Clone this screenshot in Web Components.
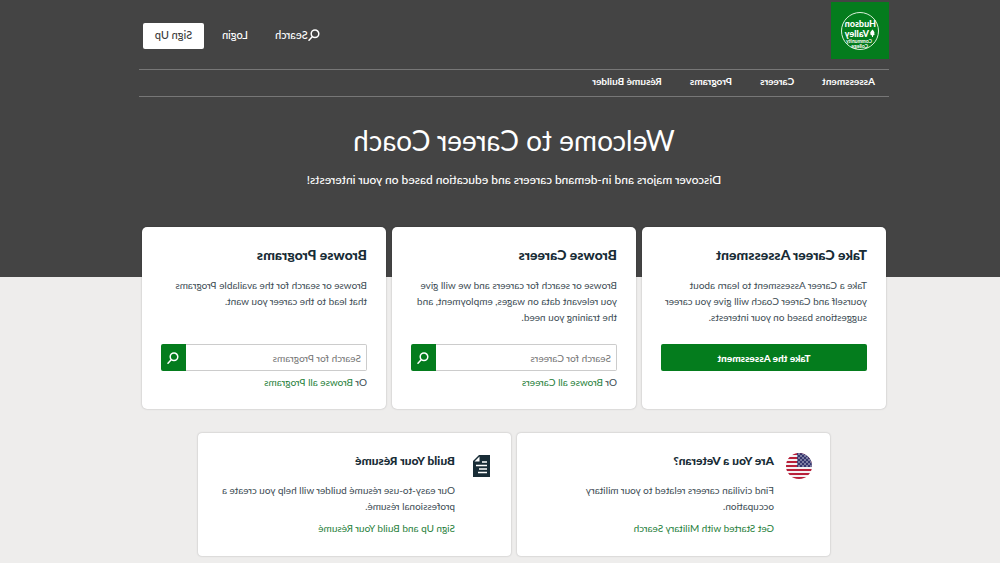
<!DOCTYPE html>
<html lang="en">
<head>
<meta charset="utf-8">
<meta name="viewport" content="width=device-width, initial-scale=1">
<title>Career Coach</title>
<style>
  body { margin: 0; background: #eeedec; font-family: Lato, "Open Sans", sans-serif; color: #3d4c54; overflow-x: hidden; }
</style>
</head>
<body>
<career-page></career-page>
<script>
const define = (name, html, setup) => {
  const template = document.createElement('template');
  template.innerHTML = html;
  customElements.define(name, class extends HTMLElement {
    constructor() {
      super();
      const root = this.attachShadow({ mode: 'open' });
      root.append(template.content.cloneNode(true));
    }
    connectedCallback() { if (setup) setup(this, this.shadowRoot); }
  });
};

define('search-icon', `
  <style>:host { display: inline-block; width: 12px; height: 12px; } svg { display: block; width: 100%; height: 100%; }</style>
  <svg viewBox="0 0 12 12" fill="none" stroke="currentColor" stroke-width="1.5" stroke-linecap="round" aria-hidden="true">
    <circle cx="5" cy="4.8" r="3.8"/><path d="M7.8 7.8 11 11.2"/>
  </svg>`);

define('college-logo', `
  <style>:host { display: block; width: 58px; height: 57px; background: #047c1d; } a, svg { display: block; }</style>
  <a href="#" aria-label="College home">
    <svg width="58" height="57" viewBox="0 0 58 57" font-family="Lato, sans-serif" fill="#fff">
      <circle cx="29" cy="29" r="18.500" fill="none" stroke="#d9efd9" stroke-width="1"/>
      <text x="13" y="25" font-size="9" font-weight="900">Hudson</text>
      <path d="M16.500 27.500c2.500 2.500 3 3.500 1.500 5h1.500l-2.500 1v1.500h-1v-1.500l-2.500-1h1.500c-1-1.500-.5-3 1.500-5z"/>
      <text x="20" y="35" font-size="9" font-weight="900">Valley</text>
      <text x="17" y="41" font-size="5" font-weight="700">Community</text>
      <text x="21" y="46" font-size="5" font-weight="700">College</text>
    </svg>
  </a>`);

define('site-header', `
  <style>
    :host { display: block; color: #fff; font-size: 11px; font-weight: 500; }
    .top { display: flex; justify-content: space-between; align-items: flex-start; height: 67px; padding-top: 2px; }
    .tools { display: flex; align-items: flex-start; padding: 21px 4px 0 0; line-height: 24px; }
    a { color: inherit; text-decoration: none; white-space: nowrap; }
    .search { display: flex; align-items: center; margin-right: 27px; }
    .login { margin-right: 18px; }
    .signup { background: #fff; color: #3c3c3c; border-radius: 2px; width: 61px; padding-bottom: 2px; text-align: center; }
    nav { display: flex; gap: 28px; padding: 0 14px 4px; border: solid #777; border-width: 1px 0; font-size: 10px; font-weight: 700; line-height: 22px; }
  </style>
  <div class="top">
    <college-logo></college-logo>
    <div class="tools">
      <a class="search" href="#"><search-icon></search-icon>Search</a>
      <a class="login" href="#">Login</a>
      <a class="signup" href="#">Sign Up</a>
    </div>
  </div>
  <nav aria-label="Main">
    <a href="#">Assessment</a><a href="#">Careers</a><a href="#">Programs</a><a href="#">Résumé Builder</a>
  </nav>`);

define('hero-banner', `
  <style>
    :host { display: block; color: #fff; text-align: center; padding-top: 25px; }
    h1 { margin: 0; font-size: 28px; line-height: 36px; font-weight: 400; }
    p { margin: 12px 0 0; font-size: 12px; line-height: 20px; font-weight: 500; }
  </style>
  <h1><slot name="title"></slot></h1>
  <p><slot></slot></p>`);

define('action-card', `
  <style>
    :host { display: flex; flex-direction: column; box-sizing: border-box; height: 182px; padding: 19px; background: #fff; border-radius: 5px; box-shadow: 0 0 2px #0004; }
    h2 { margin: 0 0 13px; font-size: 14px; line-height: 18px; font-weight: 900; color: #182c36; }
    p { margin: 0; height: 67px; font-size: 10px; line-height: 16px; }
  </style>
  <h2><slot name="title"></slot></h2>
  <p><slot></slot></p>
  <slot name="action"></slot>`);

define('primary-button', `
  <style>
    :host { display: block; }
    button { display: block; width: 100%; height: 27px; border: 0; border-radius: 2px; padding: 0; background: #047c1d; color: #fff; font: 900 10px Lato, sans-serif; }
  </style>
  <button type="button"><slot></slot></button>`);

define('search-form', `
  <style>
    :host { display: block; font-size: 10px; line-height: 16px; }
    form { display: flex; height: 27px; }
    input { flex: 1; min-width: 0; box-sizing: border-box; border: 1px solid #ccc; border-right: 0; border-radius: 2px 0 0 2px; padding: 0 5px; font: 10px Lato, sans-serif; background: #fff; }
    input::placeholder { color: #757575; opacity: 1; }
    button { display: flex; align-items: center; justify-content: center; width: 25px; border: 0; padding: 0; background: #047c1d; color: #fff; border-radius: 0 2px 2px 0; }
    div { margin-top: 3px; }
    a { color: #26803a; text-decoration: none; }
  </style>
  <form><input type="text"><button type="button" aria-label="Search"><search-icon></search-icon></button></form>
  <div>Or <a href="#"></a></div>`,
  (host, root) => {
    const topic = host.getAttribute('topic');
    const input = root.querySelector('input');
    input.placeholder = 'Search for ' + topic;
    input.setAttribute('aria-label', 'Search for ' + topic);
    root.querySelector('a').textContent = 'Browse all ' + topic;
  });

define('info-card', `
  <style>
    :host { display: flex; gap: 12px; box-sizing: border-box; height: 123px; padding: 20px 20px 20px 18px; background: #fff; border-radius: 4px; box-shadow: 0 0 2px #0004; font-size: 10px; line-height: 16px; }
    .icon { width: 26px; flex: none; }
    .body { flex: 1; min-width: 0; }
    h3 { margin: 0 0 13px; font-size: 12px; line-height: 16px; font-weight: 900; color: #182c36; }
    p { margin: 0 0 6px; }
    a { color: #26803a; text-decoration: none; }
  </style>
  <div class="icon"><slot name="icon"></slot></div>
  <div class="body"><h3><slot name="title"></slot></h3><p><slot></slot></p><a href="#"><slot name="link"></slot></a></div>`);

define('flag-icon', `
  <style>:host, svg { display: block; }</style>
  <svg width="26" height="26" viewBox="0 0 26 26" aria-hidden="true">
    <defs>
      <clipPath id="c"><circle cx="13" cy="13" r="13"/></clipPath>
      <pattern id="s" width="4" height="4" patternUnits="userSpaceOnUse"><circle cx="1" cy="1" r=".65" fill="#fff"/><circle cx="3" cy="3" r=".65" fill="#fff"/></pattern>
    </defs>
    <g clip-path="url(#c)">
      <path fill="#f4f1f3" d="M0 0h26v26H0z"/>
      <path stroke="#b8203a" stroke-width="2" d="M0 1h26M0 5h26M0 9h26M0 13h26M0 17h26M0 21h26M0 25h26"/>
      <path fill="#35366e" d="M0 0h15v14H0z"/><path fill="url(#s)" d="M0 0h15v14H0z"/>
    </g>
  </svg>`);

define('resume-icon', `
  <style>:host, svg { display: block; }</style>
  <svg width="26" height="26" viewBox="-1 0 26 26" aria-hidden="true">
    <path fill="#182c36" d="M2 2h11l6 6v16H2z"/>
    <path fill="#fff" d="M12.500 3.500v5h5z"/>
    <path stroke="#fff" stroke-width="1.300" d="M5 9h5M5 12.500h11M5 16h8M5 19.500h9"/>
  </svg>`);

define('career-page', `
  <style>
    /* The whole page is shown flipped left to right. */
    :host { display: block; transform: scaleX(-1); }
    .page { background: linear-gradient(#444 277px, #eeedec 277px); padding-right: 28px; min-height: 100vh; box-sizing: border-box; }
    .wrap { max-width: 750px; margin: 0 auto; }
    .main { display: grid; grid-template-columns: repeat(3, 1fr); gap: 6px; padding: 0 3px; margin-top: 37px; }
    .extra { display: grid; grid-template-columns: repeat(2, 1fr); gap: 6px; padding: 0 59px; margin-top: 24px; }
  </style>
  <div class="page"><div class="wrap">
    <site-header></site-header>
    <hero-banner><span slot="title">Welcome to Career Coach</span>Discover majors and in-demand careers and education based on your interests!</hero-banner>
    <div class="main">
      <action-card><span slot="title">Take Career Assessment</span>Take a Career Assessment to learn about yourself and Career Coach will give you career suggestions based on your interests.<primary-button slot="action">Take the Assessment</primary-button></action-card>
      <action-card><span slot="title">Browse Careers</span>Browse or search for careers and we will give you relevant data on wages, employment, and the training you need.<search-form slot="action" topic="Careers"></search-form></action-card>
      <action-card><span slot="title">Browse Programs</span>Browse or search for the available Programs that lead to the career you want.<search-form slot="action" topic="Programs"></search-form></action-card>
    </div>
    <div class="extra">
      <info-card><flag-icon slot="icon"></flag-icon><span slot="title">Are You a Veteran?</span>Find civilian careers related to your military occupation.<span slot="link">Get Started with Military Search</span></info-card>
      <info-card><resume-icon slot="icon"></resume-icon><span slot="title">Build Your Résumé</span>Our easy-to-use résumé builder will help you create a professional résumé.<span slot="link">Sign Up and Build Your Résumé</span></info-card>
    </div>
  </div></div>`);
</script>
</body>
</html>
